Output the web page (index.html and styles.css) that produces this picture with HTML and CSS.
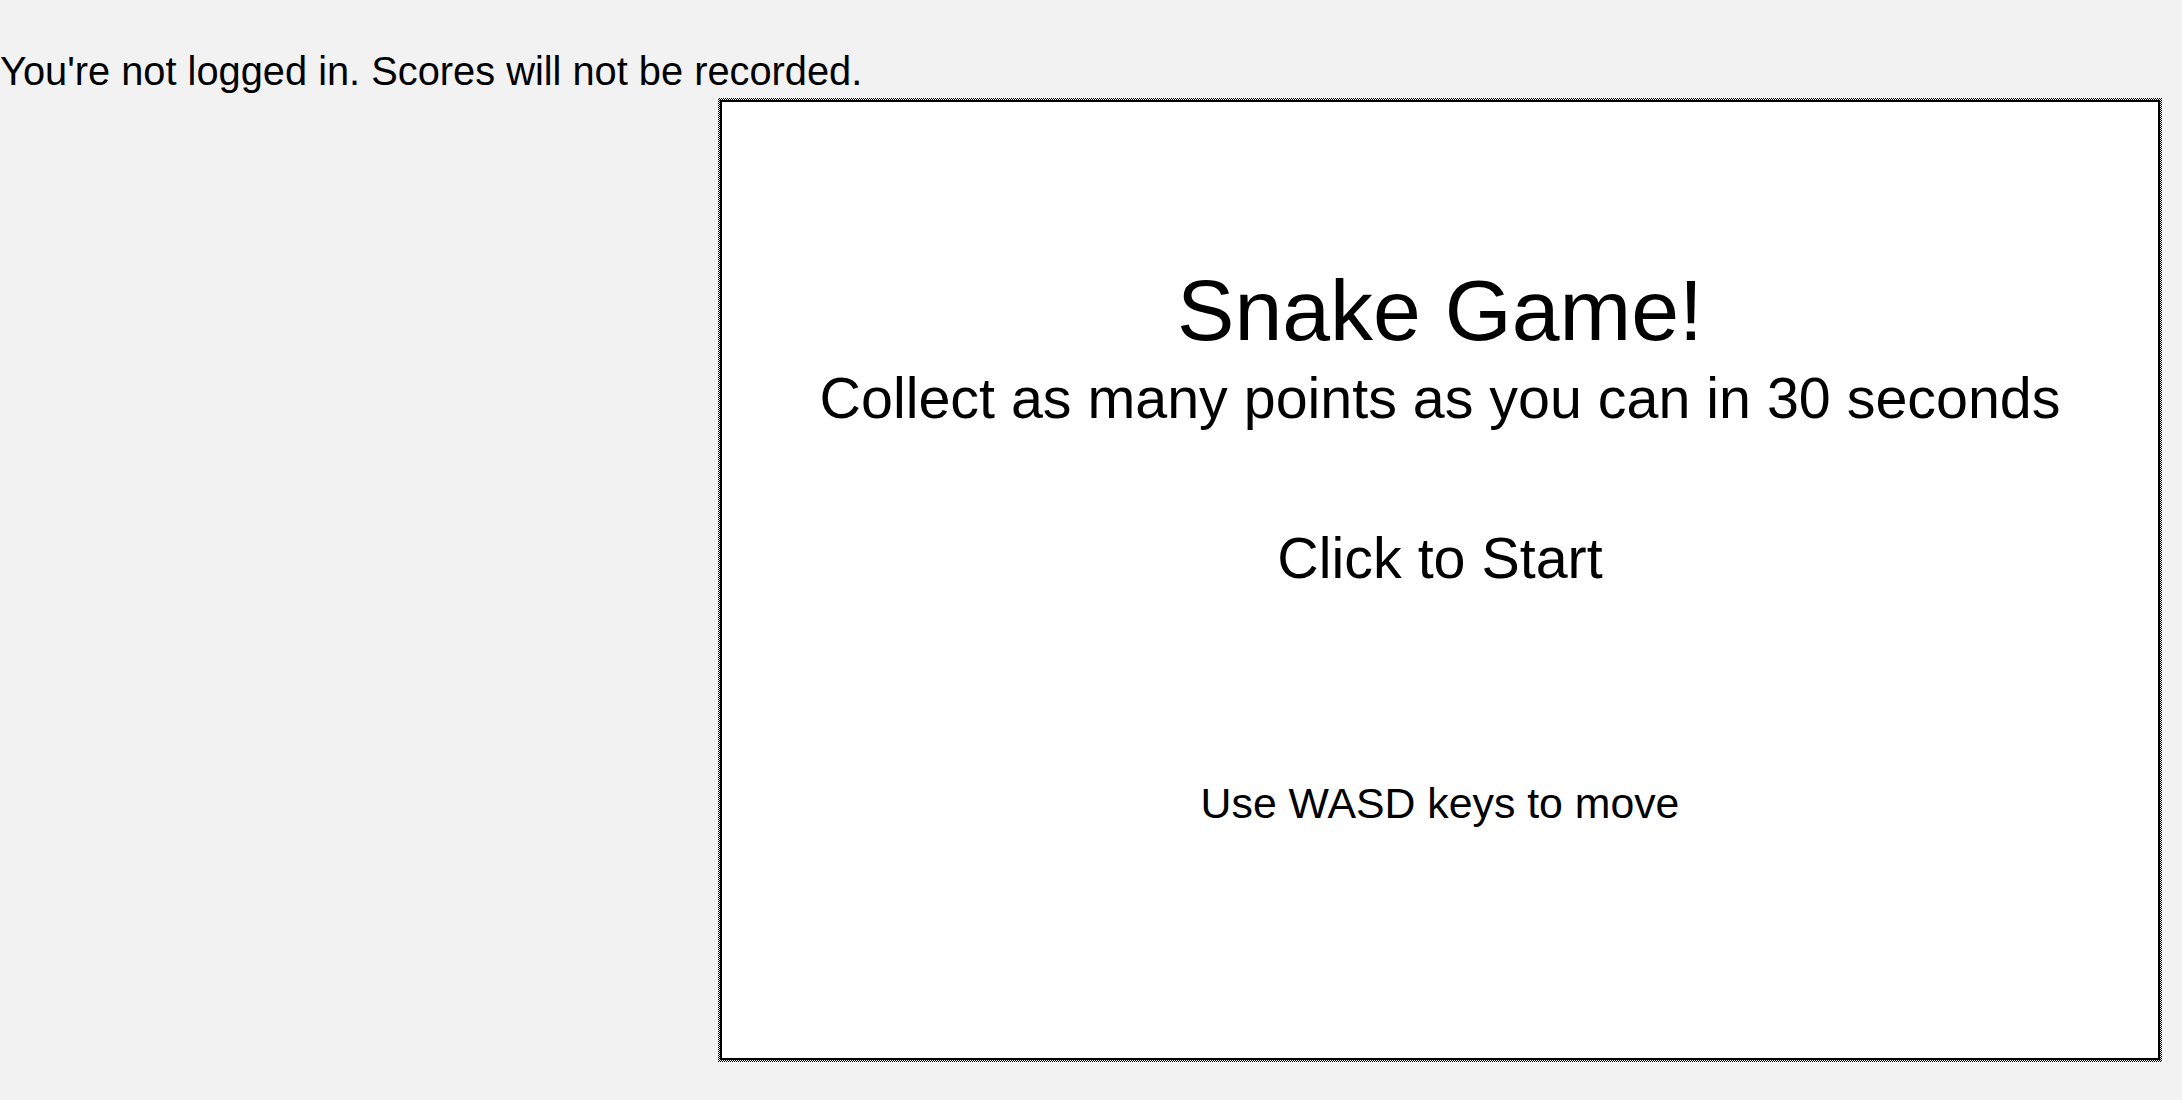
FILE: index.html
```html
<!DOCTYPE html>
<html lang="en">
<head>
<meta charset="utf-8">
<title>Snake Game</title>
<link rel="stylesheet" href="styles.css">
</head>
<body>
<p class="status">You're not logged in. Scores will not be recorded.</p>
<div class="frame">
  <div class="canvas">
    <div class="title">Snake Game!</div>
    <div class="subtitle">Collect as many points as you can in 30 seconds</div>
    <div class="start">Click to Start</div>
    <div class="hint">Use WASD keys to move</div>
  </div>
</div>
</body>
</html>
```
FILE: styles.css
```css
html, body {
  margin: 0;
  padding: 0;
  background: #f2f2f2;
}
body {
  font-family: "Liberation Sans", Arial, Helvetica, sans-serif;
  color: #000;
}
.status {
  margin: 0;
  padding-top: 46px;
  font-size: 39.8px;
  line-height: 50px;
  white-space: nowrap;
}
.frame {
  margin: 2px 0 0 718px;
  width: 1440px;
  height: 960px;
  padding: 2px;
  background: repeating-conic-gradient(#000 0 25%, #f2f2f2 0 50%) 0 0 / 2px 2px;
}
.canvas {
  box-sizing: border-box;
  width: 1440px;
  height: 960px;
  border: 2px solid #000;
  background: #fff;
  display: flex;
  flex-direction: column;
  align-items: center;
  padding-top: 165px;
  color: #000;
}
.title {
  font-size: 86px;
  line-height: 86px;
}
.subtitle {
  margin-top: 17px;
  font-size: 57.4px;
  line-height: 57.4px;
}
.start {
  margin-top: 103px;
  font-size: 57.4px;
  line-height: 57.4px;
}
.hint {
  margin-top: 194px;
  font-size: 42.8px;
  line-height: 42.8px;
}
```
